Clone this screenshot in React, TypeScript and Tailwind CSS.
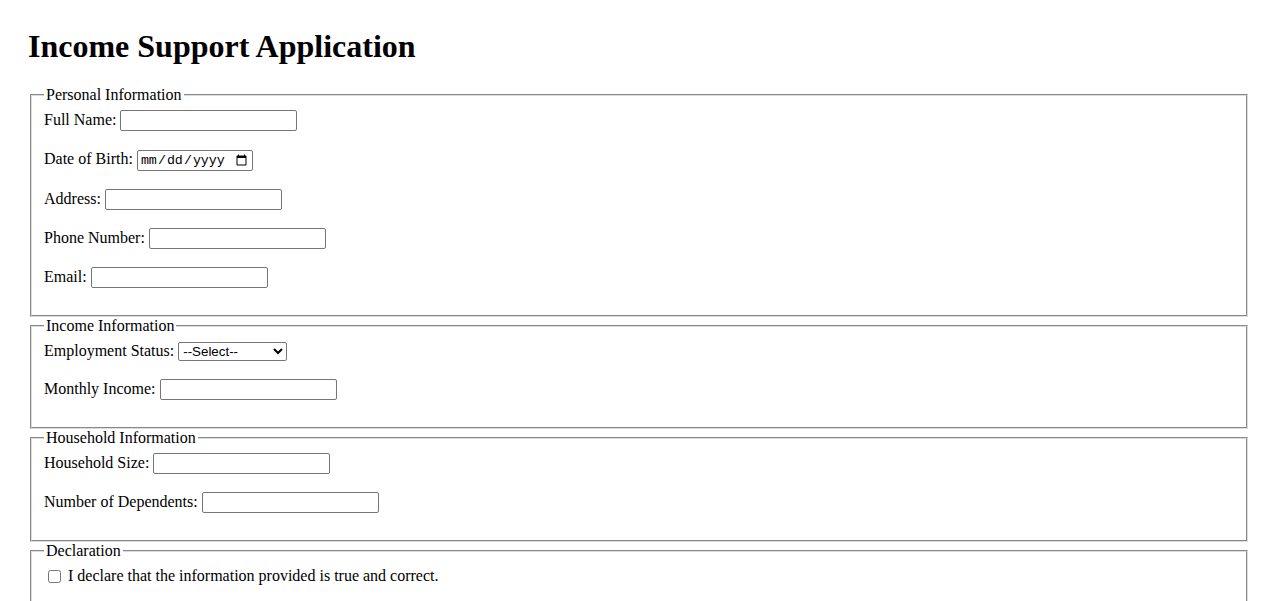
import React from "react";

const inputCls =
  "w-[177px] h-[21px] border border-[#767676] rounded-[2px] bg-white px-[2px] py-[1px] text-[13.33px] font-['Liberation_Sans',Arial,sans-serif] align-baseline";

function Row({ label, children }: { label: string; children: React.ReactNode }) {
  return (
    <div className="mb-[17px] leading-[21px]">
      <label>{label}</label> {children}
    </div>
  );
}

function Section({ title, children }: { title: string; children: React.ReactNode }) {
  return (
    <fieldset className="mx-[2px] border-2 [border-style:groove] border-[#dcdcdc] px-[12px] pt-[5px] pb-[10px]">
      <legend className="px-[2px] leading-[18px]">{title}</legend>
      {children}
    </fieldset>
  );
}

export default function App() {
  return (
    <div className="min-h-screen bg-white text-black px-[28px] pt-[28px] pb-[28px] text-[16px] font-['Liberation_Serif','Times_New_Roman',serif]">
      <h1 className="text-[32px] font-bold leading-[37px] mb-[21px]">Income Support Application</h1>
      <form>
        <Section title="Personal Information">
          <Row label="Full Name:">
            <input type="text" className={inputCls} />
          </Row>
          <Row label="Date of Birth:">
            <input
              type="date"
              className="w-[116px] h-[21px] border border-[#767676] rounded-[2px] bg-white px-[2px] py-[1px] text-[13.33px] font-['Liberation_Mono','Courier_New',monospace] align-baseline"
            />
          </Row>
          <Row label="Address:">
            <input type="text" className={inputCls} />
          </Row>
          <Row label="Phone Number:">
            <input type="tel" className={inputCls} />
          </Row>
          <Row label="Email:">
            <input type="email" className={inputCls} />
          </Row>
        </Section>

        <Section title="Income Information">
          <Row label="Employment Status:">
            <select className="w-[109px] h-[19px] border border-[#767676] rounded-[2px] bg-white text-[13.33px] font-['Liberation_Sans',Arial,sans-serif] align-baseline">
              <option>--Select--</option>
              <option>Employed</option>
              <option>Unemployed</option>
              <option>Self-employed</option>
            </select>
          </Row>
          <Row label="Monthly Income:">
            <input type="number" className={inputCls} />
          </Row>
        </Section>

        <Section title="Household Information">
          <Row label="Household Size:">
            <input type="number" className={inputCls} />
          </Row>
          <Row label="Number of Dependents:">
            <input type="number" className={inputCls} />
          </Row>
        </Section>

        <Section title="Declaration">
          <div className="mb-[17px] leading-[21px]">
            <input type="checkbox" className="w-[13px] h-[13px] ml-[4px] mr-[3px] my-[3px] align-[-2px]" />{" "}
            <label>I declare that the information provided is true and correct.</label>
          </div>
        </Section>
      </form>
    </div>
  );
}
